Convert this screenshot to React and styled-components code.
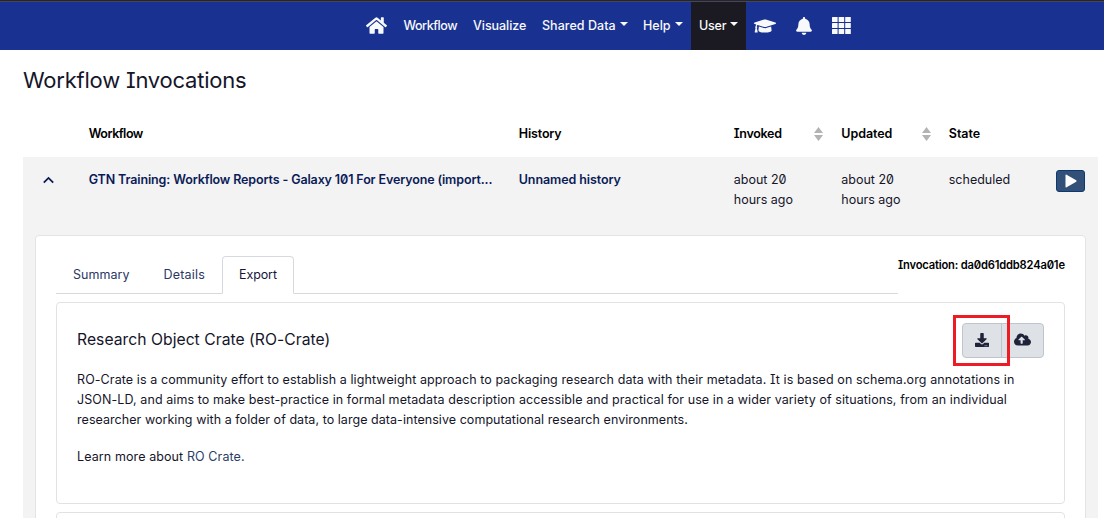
import React from 'react';
import styled, { createGlobalStyle } from 'styled-components';
import { FaHome, FaGraduationCap, FaBell, FaDownload, FaCloudUploadAlt } from 'react-icons/fa';

const GlobalStyle = createGlobalStyle`
  *, *::before, *::after { box-sizing: border-box; }
  body {
    margin: 0;
    background: #fff;
    color: #15152a;
    font-family: Inter, "Noto Sans", sans-serif;
    font-feature-settings: "zero" 1, "cv08" 1;
    font-size: 12.5px;
    line-height: 20.2px;
  }
  h1, h2, p { margin: 0; font-weight: 400; }
`;

const Page = styled.div`
  width: 1104px;
  height: 518px;
  overflow: hidden;
`;

const Masthead = styled.nav`
  height: 50px;
  padding-left: 358px;
  display: flex;
  background: #193292;
  border-top: 1px solid #26262a;
  box-shadow: inset 0 1px 0 #45455a;
`;

const NavItem = styled.a`
  width: ${(p) => p.$width}px;
  margin-top: 1px;
  padding: ${(p) => (p.$icon ? '0 0 1px 8px' : '1px 0 0 8px')};
  display: flex;
  align-items: center;
  gap: 4px;
  color: #f8f9fa;
  font-weight: 500;
  letter-spacing: ${(p) => p.$track || 0}px;
  white-space: nowrap;
  background: ${(p) => (p.$active ? '#1b1a22' : 'transparent')};
`;

const Caret = styled.span`
  margin-bottom: 6px;
  border: 4px solid transparent;
  border-top-color: currentColor;
  border-bottom: 0;
`;

const Main = styled.main`
  padding: 0 6px 0 23px;
`;

const Heading = styled.h1`
  height: 61px;
  padding-top: 15px;
  font-size: 22px;
  line-height: 30px;
  letter-spacing: -0.22px;
`;

const TableRow = styled.div`
  display: grid;
  grid-template-columns: 5fr 40fr 20fr 10fr 10fr 10fr 5fr;
  height: ${(p) => p.$height}px;
  background: ${(p) => (p.$shaded ? '#f3f3f3' : 'transparent')};
`;

const Cell = styled.div`
  min-width: 0;
  padding: 12.5px 12px 0;
`;

const HeadCell = styled(Cell)`
  display: flex;
  justify-content: space-between;
  color: #000;
  font-weight: 600;
  letter-spacing: ${(p) => p.$track || 0}px;
`;

const StrongLink = styled.a`
  display: block;
  white-space: nowrap;
  color: #0b1b57;
  font-weight: 600;
  letter-spacing: ${(p) => p.$track || 0}px;
`;

const ToggleCell = styled(Cell)`
  padding: 19px 0 0 20px;
  line-height: 0;
`;

const SortIcon = styled.svg`
  width: 9px;
  height: 14px;
  margin: 3px -6px 0 0;
  fill: #b3b3b3;
`;

const PlayButton = styled.button`
  display: flex;
  align-items: center;
  justify-content: center;
  width: 29px;
  height: 22px;
  padding: 0;
  border: 1px solid #0b3a70;
  border-radius: 3px;
  background: #325078;
`;

const Details = styled.section`
  height: 320px;
  padding: 0 12px;
  background: #f3f3f3;
`;

const Panel = styled.div`
  height: 330px;
  padding: 20px;
  border: 1px solid #e3e4e6;
  border-radius: 4px;
  background: #fff;
`;

const TabRow = styled.div`
  display: flex;
  height: 38px;
`;

const Tabs = styled.div`
  flex: 1;
  display: flex;
  border-bottom: 1px solid #d6dadf;
`;

const Tab = styled.a`
  width: ${(p) => p.$width}px;
  height: 38px;
  padding: 8px 0 0 16px;
  border: 1px solid transparent;
  border-radius: 4px 4px 0 0;
  color: #2b3866;
  letter-spacing: ${(p) => p.$track || 0}px;
  ${(p) => p.$active && 'color: #15153a; background: #fff; border-color: #d6dadf #d6dadf #fff;'}
`;

const InvocationId = styled.div`
  width: 167px;
  color: #000;
  font-size: 11.2px;
  font-weight: 600;
  line-height: 18px;
  letter-spacing: -0.19px;
  white-space: nowrap;
`;

const Card = styled.article`
  height: 202px;
  margin-top: 8px;
  padding: 20px;
  border: 1px solid #e0e2e4;
  border-radius: 4px;
`;

const CardHeader = styled.header`
  display: flex;
  justify-content: space-between;
  height: 47px;
`;

const CardTitle = styled.h2`
  padding-top: 5px;
  font-size: 15.7px;
  line-height: 24px;
  letter-spacing: 0.03px;
`;

const ButtonGroup = styled.div`
  position: relative;
  display: flex;
  width: 82px;
  height: 35px;
  border: 1px solid #bfc5cc;
  border-radius: 4px;
  background: #dee2e6;
`;

const IconButton = styled.button`
  width: ${(p) => p.$width}px;
  height: 33px;
  padding: 0 0 2px;
  display: flex;
  align-items: center;
  justify-content: center;
  border: 0;
  border-left: ${(p) => (p.$divided ? '1px solid #bfc5cc' : '0')};
  background: none;
  color: #1f2238;
`;

const Highlight = styled.span`
  position: absolute;
  left: -10px;
  top: -9px;
  width: 57px;
  height: 51px;
  border: 3px solid #ed1c24;
`;

const Paragraph = styled.p`
  margin-bottom: 16.5px;
  letter-spacing: 0.1px;
  white-space: nowrap;
`;

const Line = styled.span`
  display: block;
  letter-spacing: ${(p) => p.$track || 0}px;
`;

const TextLink = styled.a`
  color: #2b3d66;
`;

const Sort = () => (
  <SortIcon viewBox="0 0 9 14">
    <path d="M4.5 0 9 6H0zM4.5 14 0 8h9z" />
  </SortIcon>
);

const cells = [0, 6.6, 13.2];

export default function App() {
  return (
    <Page>
      <GlobalStyle />
      <Masthead>
        <NavItem $width={37.5} $icon><FaHome size={21} /></NavItem>
        <NavItem $width={69.5} $track={-0.42}>Workflow</NavItem>
        <NavItem $width={69} $track={-0.05}>Visualize</NavItem>
        <NavItem $width={101} $track={0.04}>Shared Data<Caret /></NavItem>
        <NavItem $width={56}>Help<Caret /></NavItem>
        <NavItem $width={55} $active $track={-0.2}>User<Caret /></NavItem>
        <NavItem $width={41} $icon><FaGraduationCap size={22} /></NavItem>
        <NavItem $width={37} $icon><FaBell size={18} /></NavItem>
        <NavItem $width={36} $icon>
          <svg width="19" height="17" viewBox="0 0 19 17" fill="currentColor">
            {cells.map((x) => [0, 6, 12].map((y) => (
              <rect key={`${x}-${y}`} x={x} y={y} width="5.6" height="5" rx="0.5" />
            )))}
          </svg>
        </NavItem>
      </Masthead>
      <Main>
        <Heading>Workflow Invocations</Heading>
        <TableRow $height={46}>
          <Cell />
          <HeadCell $track={-0.5}>Workflow</HeadCell>
          <HeadCell $track={-0.15}>History</HeadCell>
          <HeadCell $track={-0.3}>Invoked<Sort /></HeadCell>
          <HeadCell $track={-0.05}>Updated<Sort /></HeadCell>
          <HeadCell>State</HeadCell>
          <Cell />
        </TableRow>
        <TableRow $height={78} $shaded>
          <ToggleCell>
            <svg width="11" height="8" viewBox="0 0 11 8" fill="none" stroke="#0b1b57" strokeWidth="1.8">
              <path d="M0.8 6.6 5.5 1.9l4.7 4.7" />
            </svg>
          </ToggleCell>
          <Cell><StrongLink $track={-0.13}>GTN Training: Workflow Reports - Galaxy 101 For Everyone (import...</StrongLink></Cell>
          <Cell><StrongLink $track={-0.09}>Unnamed history</StrongLink></Cell>
          <Cell>about 20<br />hours ago</Cell>
          <Cell>about 20<br />hours ago</Cell>
          <Cell>scheduled</Cell>
          <Cell>
            <PlayButton>
              <svg width="12" height="14" viewBox="0 0 12 14" fill="#fff"><path d="M0.5 1.2Q0.5 0 1.6 0.7L11.2 6.3Q12 7 11.2 7.7L1.6 13.3Q0.5 14 0.5 12.8z" /></svg>
            </PlayButton>
          </Cell>
        </TableRow>
        <Details>
          <Panel>
            <TabRow>
              <Tabs>
                <Tab $width={90.5} $track={0.05}>Summary</Tab>
                <Tab $width={75.5} $track={0.2}>Details</Tab>
                <Tab $width={72} $track={-0.1} $active>Export</Tab>
              </Tabs>
              <InvocationId>Invocation: da0d61ddb824a01e</InvocationId>
            </TabRow>
            <Card>
              <CardHeader>
                <CardTitle>Research Object Crate (RO-Crate)</CardTitle>
                <ButtonGroup>
                  <IconButton $width={38}><FaDownload size={14} /></IconButton>
                  <IconButton $width={42} $divided><FaCloudUploadAlt size={17} /></IconButton>
                  <Highlight />
                </ButtonGroup>
              </CardHeader>
              <Paragraph>
                <Line $track={0.09}>RO-Crate is a community effort to establish a lightweight approach to packaging research data with their metadata. It is based on schema.org annotations in</Line>
                <Line $track={0.085}>JSON-LD, and aims to make best-practice in formal metadata description accessible and practical for use in a wider variety of situations, from an individual</Line>
                <Line $track={0.05}>researcher working with a folder of data, to large data-intensive computational research environments.</Line>
              </Paragraph>
              <Paragraph>Learn more about <TextLink>RO Crate.</TextLink></Paragraph>
            </Card>
            <Card />
          </Panel>
        </Details>
      </Main>
    </Page>
  );
}
